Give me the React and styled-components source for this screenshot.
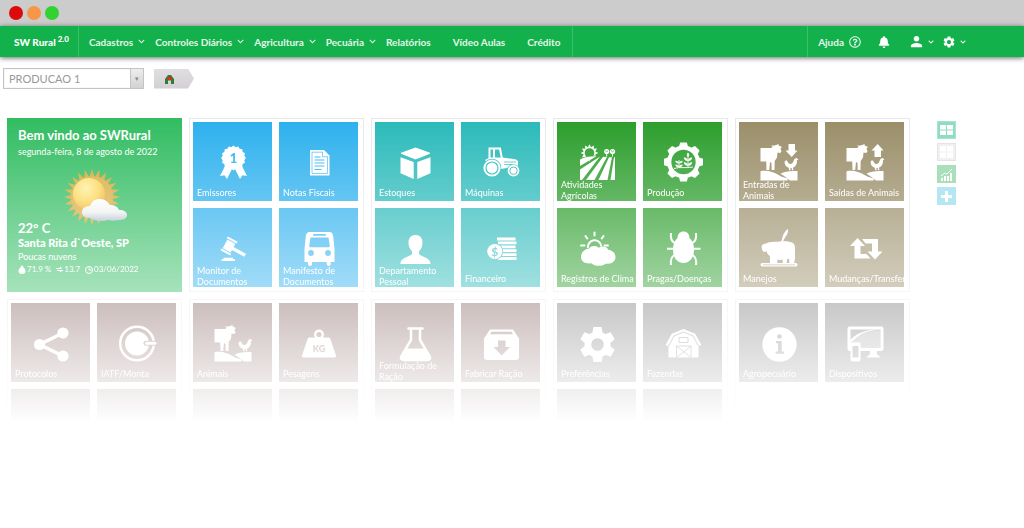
import React from 'react';
import styled, { createGlobalStyle } from 'styled-components';
import { FaBell, FaChevronDown, FaRegQuestionCircle } from 'react-icons/fa';
import { IoMdPerson } from 'react-icons/io';
import { MdSettings } from 'react-icons/md';

const GlobalStyle = createGlobalStyle`
  * {
    box-sizing: border-box;
  }

  body {
    margin: 0;
    background: #fff;
    font-family: Lato, 'Open Sans', sans-serif;
  }

  a {
    color: inherit;
    text-decoration: none;
  }
`;

const WindowBar = styled.div`
  display: flex;
  align-items: center;
  gap: 4px;
  height: 26px;
  padding-left: 9px;
  background: #ccc;
`;

const Dot = styled.span`
  width: 14px;
  height: 14px;
  border-radius: 50%;
  background: ${({ color }) => color};
`;

const Navbar = styled.nav`
  display: flex;
  height: 31px;
  padding-right: 54px;
  background: #12b14b;
  color: #e4f7ea;
  font-size: 10px;
  font-weight: 700;
  box-shadow: 0 1px 5px rgba(0, 0, 0, 0.6);
`;

const Brand = styled.a`
  display: flex;
  align-items: center;
  padding: 0 9px 0 14px;
  border-right: 1px solid #3cbf6b;
  color: #fff;
  font-weight: 900;
  white-space: nowrap;

  sup {
    margin: 0 0 6px 2px;
    font-size: 8px;
    line-height: 10px;
  }
`;

const NavGroup = styled.div`
  display: flex;
  border-right: 1px solid #3cbf6b;
`;

const NavRight = styled.div`
  display: flex;
  margin-left: auto;
  border-left: 1px solid #3cbf6b;
`;

const NavItem = styled.a`
  display: flex;
  align-items: center;
  gap: 5px;
  padding: 0 ${({ $sub }) => ($sub ? '0' : '12px')} 0 10px;
  white-space: nowrap;
`;

const IconItem = styled.button`
  display: flex;
  align-items: center;
  gap: 4px;
  padding: 0 4px;
  border: 0;
  background: none;
  color: #fff;
`;

const BellItem = styled(IconItem)`
  padding: 0 15px 0 5px;
`;

const Toolbar = styled.div`
  display: flex;
  align-items: center;
  gap: 10px;
  padding: 11px 3px 0;
`;

const SelectBox = styled.div`
  display: flex;
  width: 141px;
  height: 21px;
  border: 1px solid #c4c4c4;
  box-shadow: inset 0 0 1px #bbb;
`;

const Select = styled.select`
  flex: 1;
  min-width: 0;
  padding: 0 5px;
  border: 0;
  outline: 0;
  appearance: none;
  background: none;
  color: #999;
  font: 11px/19px Lato, sans-serif;
`;

const SelectArrow = styled.span`
  display: grid;
  place-items: center;
  width: 13px;
  border-left: 1px solid #c4c4c4;
  background: linear-gradient(#eee, #d2d2d2);
  color: #888;
  font-size: 7px;
  pointer-events: none;
`;

const Crumb = styled.a`
  display: flex;
  align-items: center;
  width: 40px;
  height: 20px;
  padding-left: 10px;
  background: linear-gradient(#e0dee0, #d2d0d2);
  clip-path: polygon(0 0, 34px 0, 100% 50%, 34px 100%, 0 100%);
`;

const Main = styled.main`
  display: flex;
  gap: 26px;
  align-items: flex-start;
  padding: 29px 68px 0 7px;
`;

const Board = styled.div`
  display: grid;
  flex: 1;
  grid-template-columns: repeat(auto-fill, 175px);
  gap: 7px;
  mask-image: linear-gradient(#000 4px, transparent 304px);
`;

const Welcome = styled.section`
  display: flex;
  flex-direction: column;
  height: 174px;
  padding: 9px 11px 0;
  background: #33bd63;
  color: #fff;
  font-size: 9px;
  line-height: 13px;
  white-space: nowrap;

  h1,
  h2,
  p {
    margin: 0;
  }

  h1 {
    font-size: 13px;
    line-height: 16px;
  }

  h2 {
    font-size: 11px;
    font-weight: 900;
    line-height: 14px;
  }
`;

const Today = styled.p`
  padding-top: 2px;
`;

const SunPicture = styled.svg`
  width: 70px;
  height: 60px;
  margin: 10px 0 -8px 44px;
`;

const Temperature = styled.strong`
  font-size: 13px;
  line-height: 16px;
`;

const Measures = styled.p`
  display: flex;
  gap: 5px;
  font-size: 8px;

  span {
    display: flex;
    align-items: center;
    gap: 1px;
  }
`;

const Group = styled.section`
  display: grid;
  grid-template-columns: 79px 79px;
  grid-auto-rows: 79px;
  align-content: start;
  gap: 7px;
  height: 174px;
  padding: 3px;
  border: 1px solid #e8e8e8;
`;

const Tile = styled.a`
  display: grid;
  grid-template-columns: 100%;
  grid-template-rows: 100%;
  overflow: hidden;
  background: ${({ $color }) => $color};
  color: ${({ $color }) => $color};

  > * {
    grid-area: 1 / 1;
  }
`;

const TileIcon = styled.svg`
  place-self: center;
  width: 40px;
  height: 40px;
  fill: #fff;
`;

const TileLabel = styled.span`
  align-self: end;
  min-height: 14px;
  padding-left: 4px;
  color: #fff;
  font-size: 9px;
  line-height: 11px;
  white-space: ${({ $oneLine }) => ($oneLine ? 'nowrap' : 'normal')};
`;

const Shortcuts = styled.aside`
  display: flex;
  flex-direction: column;
  gap: 4px;
  padding-top: 3px;
`;

const Shortcut = styled.button`
  display: grid;
  place-items: center;
  width: 19px;
  height: 18px;
  padding: 0;
  border: 1px solid ${({ $border }) => $border};
  background: ${({ $color }) => $color};
`;

// closed polygon that alternates between two radii
const burst = (cx, cy, points, outer, inner) =>
  Array.from({ length: points * 2 }, (_, i) => {
    const r = i % 2 ? inner : outer;
    const a = (i * Math.PI) / points - Math.PI / 2;
    return `${(cx + r * Math.cos(a)).toFixed(2)},${(cy + r * Math.sin(a)).toFixed(2)}`;
  }).join(' ');

const Teeth = ({ cx, cy, count, r, width, height }) =>
  Array.from({ length: count }, (_, i) => (
    <path
      key={i}
      d={`M${cx - width / 2} ${cy - r + height}L${cx - width / 2 + 1.2} ${cy - r}h${width - 2.4}L${cx + width / 2} ${cy - r + height}z`}
      transform={`rotate(${(i * 360) / count} ${cx} ${cy})`}
    />
  ));

const Cow = () => (
  <>
    <path d="M1.5 6h10.7l1.3-1.2L12.3 3l2 .8 3-.8 2.2-1 .2 1.4L23 5l-1.5 1.6 1 3.2-1.5 1.2-2.5-.4-.5 4.9-2.3 3.500-.2 9H12.700l-.2-7-1.500-1-.8 8H7.500l-.3-8.500H1.500z" />
    <path d="M1.5 29.300c7-1.300 12 .4 18.500 4 4 2.200 7.500 3 9 3.200l-.6 2H1.500z" />
    <path d="M21.500 31.700c4-2.200 9-3 17-2.600v9.400H31c-2.500-2-5.500-4.600-9.500-6.800z" />
  </>
);

const Hen = () => (
  <path d="M25.500 20l1.500-2 1.600 1.500c1 3 3.400 3 5 1.400l2-4.200 2-.7 1.800 1.500-1.500.8c.5 4-1.500 6.400-4 7.500l.6 2.500h-1.400l-.5-2.200h-1.200l.3 2.200h-1.500l-.5-2.600c-3-.9-4-3.200-4.200-5.700z" />
);

const icons = {
  award: (
    <>
      <path d="M12 24L7 34l4.500-.8L14 37l5-10zM29 24l5 10-4.500-.8L27 37l-5-10z" />
      <polygon points={burst(20.5, 16, 16, 12.4, 11)} />
      <text x="20.5" y="21" textAnchor="middle" fontSize="13" fontWeight="900" fill="currentColor">
        1
      </text>
    </>
  ),
  document: (
    <>
      <path d="M11 8h14l5.500 5.500v20H11z" />
      <path
        d="M13 10.200h10.500v4.500h5v16.800H13z"
        fill="none"
        stroke="currentColor"
        strokeWidth=".7"
      />
      <path d="M15.500 15h6M15.500 18h10M15.500 21h10M15.500 24h10M15.500 27.500h7" stroke="currentColor" strokeWidth="1.2" />
    </>
  ),
  gavel: (
    <>
      <g transform="rotate(28 16 18)">
        <path d="M11.500 13h9v10h-9zM10.500 10.200h11v2h-11zM10.500 23.800h11v2h-11zM20 16.800h14.500v3.400H20z" />
      </g>
      <path d="M10.500 29.800h9.500v1.500h2v1.700H8.500v-1.700h2z" />
    </>
  ),
  bus: (
    <>
      <path d="M11 4h19c3 0 4 2 4.300 5l1.200 12v13h-3.800v2a2 2 0 0 1-4 0v-2H13v2a2 2 0 0 1-4 0v-2H5.500V21L6.700 9c.3-3 1.300-5 4.300-5z" />
      <g fill="currentColor">
        <rect x="14" y="6" width="13" height="1.8" rx=".9" />
        <path d="M11.500 9.500h18l1.300 8.500c.1.700-.3 1.200-1 1.200H11.200c-.7 0-1.100-.5-1-1.200z" />
        <circle cx="12" cy="25" r="2.9" />
        <circle cx="29" cy="25" r="2.9" />
      </g>
    </>
  ),
  cube: <path d="M20.500 5.500l14.500 5.300v1l-14.500 5.700L6 11.800v-1zM5.500 15.200L18.700 20v17L5.500 31.200zM35.500 15.200L22.300 20v17l13.200-5.800z" />,
  tractor: (
    <>
      <path
        d="M8.500 17V6.500h10.500L21 17M13 7v10"
        fill="none"
        stroke="#fff"
        strokeWidth="2"
      />
      <path d="M4 18l5-2.500h12l13.500 1.800 2.500 1.700V24l-17 3-2 2H15z" />
      <path d="M23 20h12M23 22.500h8" stroke="currentColor" strokeWidth=".8" />
      <circle cx="11" cy="26" r="9.3" fill="currentColor" />
      <circle cx="11" cy="26" r="8.6" />
      <circle cx="11" cy="26" r="6" fill="none" stroke="currentColor" strokeWidth="1.2" />
      <circle cx="32.5" cy="28.7" r="6.5" fill="currentColor" />
      <circle cx="32.5" cy="28.7" r="5.9" />
      <circle cx="32.5" cy="28.7" r="3.7" fill="none" stroke="currentColor" />
    </>
  ),
  person: (
    <path d="M20.500 7c4.500 0 7 3 7 7.500 0 3.800-1.500 7-3.500 8.700v2.300c0 3 11.500 3.300 11.500 10.500h-30c0-7.200 11.500-7.500 11.500-10.500v-2.300c-2-1.700-3.500-4.900-3.500-8.700 0-4.500 2.500-7.500 7-7.500z" />
  ),
  coins: (
    <>
      <path
        d="M16 11h18.500M17 14.900h18.500M16 18.800h18.500M17 22.700h18.500M17 26.600h18.500M17 30.500h18.500"
        stroke="#fff"
        strokeWidth="2.8"
      />
      <circle cx="13.8" cy="23.5" r="8.4" fill="currentColor" />
      <circle cx="13.8" cy="23.5" r="7.6" />
      <text x="13.8" y="28" textAnchor="middle" fontSize="12" fontWeight="700" fill="currentColor">
        $
      </text>
    </>
  ),
  field: (
    <>
      <polygon points={burst(12.5, 11, 12, 8.8, 6)} />
      <circle cx="12.5" cy="11" r="4.8" fill="currentColor" />
      <path d="M3 16.500c8-4 20-3.500 35-2v4H3z" fill="currentColor" />
      <path d="M3 17.500c4-2.500 10-3.500 16.500-3.300L3 24zM23 14.500L3 27.500V38h2zM26 14.700L9 38h8.500L30 15zM32 15.200L21.500 38h9L35 15.200zM37 15.200h1V38h-4.500z" />
      <circle cx="29.7" cy="9.5" r="2.6" />
      <circle cx="35.5" cy="9.5" r="2.6" />
      <path d="M29.700 9v5.500M35.500 9v5.500" stroke="#fff" />
      <path d="M28.300 8.600l1.400 1.200 1.400-1.200M34.100 8.600l1.400 1.200 1.400-1.200" fill="none" stroke="currentColor" strokeWidth=".8" />
    </>
  ),
  gearPlant: (
    <>
      <Teeth cx={20.5} cy={20} count={8} r={19.5} width={9} height={4} />
      <circle cx="20.5" cy="20" r="16.4" />
      <circle cx="20.5" cy="20" r="12.2" fill="currentColor" />
      <path d="M16 26v-8M25 25V12M11 26.500c6-2 12 0 19-1.500" fill="none" stroke="#fff" strokeWidth=".9" />
      <path d="M16 21.500c-2.500 0-3.500-1-3.700-2.800 2.400 0 3.500 1 3.700 2.800zM16 21.500c2.500 0 3.500-1 3.700-2.800-2.400 0-3.500 1-3.700 2.800zM16 25.300c-2.500 0-3.500-1-3.700-2.800 2.400 0 3.500 1 3.700 2.800zM16 25.300c2.500 0 3.500-1 3.700-2.800-2.400 0-3.500 1-3.700 2.800zM25 19c-3 0-4-1.500-4.200-3.800 2.800.3 4 1.500 4.200 3.800zM25 19c3 0 4-1.500 4.200-3.800-2.800.3-4 1.500-4.200 3.800zM25 23.800c-3 0-4-1.500-4.200-3.800 2.800.3 4 1.500 4.200 3.800zM25 23.800c3 0 4-1.500 4.200-3.800-2.800.3-4 1.500-4.200 3.800zM25 15c-1.700-1.500-1.700-3 0-4.500 1.700 1.500 1.700 3 0 4.500z" />
    </>
  ),
  cloudSun: (
    <>
      <path d="M17.500 4.500v3M8.500 8l1.700 2.500M26.500 8l-1.700 2.500M4 17.500h3.500M27.500 17.500h3.500" stroke="#fff" strokeWidth="2" strokeLinecap="round" />
      <path d="M11 20a6.700 6.700 0 1 1 13.300-1.500" fill="none" stroke="#fff" strokeWidth="2" />
      <path d="M12 20.500c2-3.200 8-3.200 9.500-.7 4-3 9.500-.7 9.500 2 5 .7 7.500 3.700 7.500 7.200 0 4.500-4 7.500-9.500 6.500-3.500 3.200-11 3.200-14.500-.3-6 1-10.500-1.700-10.500-6.200 0-4.500 3-7.500 8-8.500z" />
    </>
  ),
  bug: (
    <>
      <path d="M20.500 3.500c3.500 0 6 2.700 6 6.500 3 2.500 4.500 6.500 4.500 11.500 0 8-4 13.500-10.500 13.500S10 29.500 10 21.500C10 16.500 11.500 12.500 14.500 10c0-3.800 2.500-6.500 6-6.500z" />
      <path d="M11.500 15C8 13 7.500 9 8 5M29.500 15c3.500-2 4-6 3.500-10M10.500 20.700H4M30.500 20.700H37.500M11.500 27C8 29 7.500 33 8 37M29.500 27c3.500 2 4 6 3.500 10" fill="none" stroke="#fff" strokeWidth="2" />
    </>
  ),
  cowIn: (
    <>
      <Cow />
      <Hen />
      <path d="M29.500 2h6.500v6.500h2.500L32.700 15l-6.200-6.500h3z" />
    </>
  ),
  cowOut: (
    <>
      <Cow />
      <Hen />
      <path d="M29.500 15H36V8.500h2.500L32.700 2l-6.200 6.500h3z" />
    </>
  ),
  cowHen: (
    <>
      <Cow />
      <Hen />
    </>
  ),
  handling: (
    <>
      <path d="M7 15.500c4-2 8-1.500 12-1.700 5-.8 10-.6 14 .7 2 .8 3 2.500 3 6V30c0 2-.7 3-1 6h-4.500L30 30.500l-2 1-.5 4.500H24l-.5-4.500c-2 .5-3 .5-5 0l-.5 4.500h-7v-8c-2-1-3-3-3.500-5-1.500 1.200-3 1.200-4-.2l-1-4.300 1.500-2.300z" />
      <path d="M22 14.500l2-7C25 5 26.500 2.500 29 1c.5 3-.8 6-3 8.500l-2.500 5z" />
      <rect x="1.5" y="35" width="37" height="3.5" rx="1.7" />
      <path d="M4 36.800h32" stroke="currentColor" strokeWidth=".7" />
    </>
  ),
  transfer: (
    <path d="M12.500 10L20 18h-4.500v8h6l4 4.500H9.500V18H5zM30 31.500L22.500 23.500H27v-8h-6.500l-3.500-4.500h16v12.500h4.500z" />
  ),
  share: (
    <>
      <path d="M32 10L8.500 21.500 32 33" fill="none" stroke="#fff" strokeWidth="3.5" />
      <circle cx="8.5" cy="21.5" r="5.6" />
      <circle cx="32" cy="10" r="5.6" />
      <circle cx="32" cy="33" r="5.6" />
    </>
  ),
  dial: (
    <>
      <circle cx="20" cy="20.5" r="16.8" fill="none" stroke="#fff" strokeWidth="2.5" />
      <circle cx="20" cy="20.5" r="12" />
      <rect x="26.5" y="17.7" width="13" height="5" rx="2.5" fill="currentColor" />
      <rect x="28" y="18.7" width="11.5" height="3" rx="1.5" />
    </>
  ),
  weight: (
    <>
      <circle cx="20" cy="11.5" r="3.8" fill="none" stroke="#fff" strokeWidth="2.4" />
      <path d="M10.500 14.500h19c1 0 1.600.5 1.900 1.500L37 32.500c.3 1.200-.2 2-1.500 2h-31c-1.300 0-1.800-.8-1.500-2L8.600 16c.3-1 .9-1.500 1.900-1.500z" />
      <text x="20" y="28.5" textAnchor="middle" fontSize="9" fontWeight="900" fill="currentColor">
        KG
      </text>
    </>
  ),
  flask: (
    <>
      <path
        d="M16 6v11L6.500 33c-1.200 2.200-.3 4 2.500 4h23c2.800 0 3.700-1.800 2.500-4L25 17V6M13.500 5.500h14"
        fill="none"
        stroke="#fff"
        strokeWidth="2.5"
        strokeLinecap="round"
      />
      <path d="M11.500 25.500h18L35 35l-2.500 2.500h-24L6 35z" />
    </>
  ),
  boxDown: (
    <>
      <path d="M9 6.500h23l6 9V34c0 2-1 3-3 3H6c-2 0-3-1-3-3V15.500z" />
      <path d="M10.500 8.800h20l1.500 2.500H9zM17 17.500h7.500V24H29l-8.300 8.500L12.500 24H17z" fill="currentColor" />
    </>
  ),
  gear: (
    <>
      <Teeth cx={20.5} cy={21.5} count={6} r={17.5} width={10.5} height={7} />
      <circle cx="20.5" cy="21.5" r="13" />
      <circle cx="20.5" cy="21.5" r="6.3" fill="currentColor" />
    </>
  ),
  barn: (
    <>
      <path d="M5.500 34.500V21L10 12.500l10.500-5 10.500 5L35.500 21v13.500z" />
      <path d="M3.500 22.500L9.500 11.500l11-4.500 11 4.500 6 11" fill="none" stroke="#fff" strokeWidth="2" />
      <path
        d="M6 22.500l5-9.500 9.500-4 9.500 4 5 9.500M16 14.500h9v5h-9zM13.500 34.500V23h14.500v11.500M13.500 23L28 34.500M28 23L13.500 34.500"
        fill="none"
        stroke="currentColor"
        strokeWidth=".9"
      />
    </>
  ),
  info: (
    <>
      <circle cx="20.5" cy="21.5" r="17.2" />
      <circle cx="20.5" cy="13.5" r="2.3" fill="currentColor" />
      <path d="M17 18h5.700v10.500H25v2.200h-8.500v-2.200H19v-8.200h-2z" fill="currentColor" />
    </>
  ),
  devices: (
    <>
      <path d="M4.500 3.500h32a2 2 0 0 1 2 2V26a2 2 0 0 1-2 2h-32a2 2 0 0 1-2-2V5.500a2 2 0 0 1 2-2z" />
      <path d="M5.500 6.500h30V25h-20v-5.500h-10z" fill="currentColor" />
      <path d="M5.500 20C13 11.500 23 8 35.500 7.500V25h-20v-5z" opacity=".35" />
      <path d="M5.500 20.500C13 11 23 7.500 35.500 6.500H30C18 7.500 9 12 5.500 17z" />
      <path d="M25 28h7v2.500c0 2 3 2 3 4H22c0-2 3-2 3-4z" />
      <rect x="5.5" y="20.5" width="10" height="18" rx="2" />
      <rect x="7.5" y="23" width="6" height="11.5" fill="currentColor" />
    </>
  )
};

const menu = [
  { text: 'Cadastros', sub: true },
  { text: 'Controles Diários', sub: true },
  { text: 'Agricultura', sub: true },
  { text: 'Pecuária', sub: true },
  { text: 'Relatórios' },
  { text: 'Vídeo Aulas' },
  { text: 'Crédito' }
];

const groups = [
  {
    color: '#2eb1ee',
    tiles: [
      ['Emissores', 'award'],
      ['Notas Fiscais', 'document'],
      ['Monitor de Documentos', 'gavel'],
      ['Manifesto de Documentos', 'bus']
    ]
  },
  {
    color: '#2cbaba',
    tiles: [
      ['Estoques', 'cube'],
      ['Máquinas', 'tractor'],
      ['Departamento Pessoal', 'person'],
      ['Financeiro', 'coins']
    ]
  },
  {
    color: '#2d9e2d',
    tiles: [
      ['Atividades Agrícolas', 'field'],
      ['Produção', 'gearPlant'],
      ['Registros de Clima', 'cloudSun', true],
      ['Pragas/Doenças', 'bug']
    ]
  },
  {
    color: '#9b8f6a',
    tiles: [
      ['Entradas de Animais', 'cowIn'],
      ['Saídas de Animais', 'cowOut', true],
      ['Manejos', 'handling'],
      ['Mudanças/Transfer', 'transfer', true]
    ]
  },
  {
    color: '#7f5c5a',
    tiles: [['Protocolos', 'share'], ['IATF/Monta', 'dial'], [], []]
  },
  {
    color: '#7f5c5a',
    tiles: [['Animais', 'cowHen'], ['Pesagens', 'weight'], [], []]
  },
  {
    color: '#7f5c5a',
    tiles: [['Formulação de Ração', 'flask'], ['Fabricar Ração', 'boxDown'], [], []]
  },
  {
    color: '#747474',
    tiles: [['Preferências', 'gear'], ['Fazendas', 'barn'], [], []]
  },
  {
    color: '#747474',
    tiles: [['Agropecuário', 'info'], ['Dispositivos', 'devices']]
  }
];

const SunCloud = () => (
  <SunPicture viewBox="0 0 70 60" aria-hidden="true">
    <defs>
      <radialGradient id="sun" cx="40%" cy="30%" r="70%">
        <stop offset="0" stopColor="#fdf0a0" />
        <stop offset=".6" stopColor="#fbd75a" />
        <stop offset="1" stopColor="#eeb02e" />
      </radialGradient>
      <linearGradient id="cloud" x1="0" y1="0" x2="0" y2="1">
        <stop offset="0" stopColor="#fff" />
        <stop offset=".6" stopColor="#efefef" />
        <stop offset="1" stopColor="#a9bccb" />
      </linearGradient>
    </defs>
    <polygon points={burst(30, 29, 24, 28, 20)} fill="#d9a835" />
    <circle cx="30" cy="29" r="21" fill="#d9ae43" />
    <circle cx="27" cy="26" r="16" fill="url(#sun)" />
    <path
      d="M28 50c-6 0-8-3-8-6 0-4 4-6 8-6 2-6 6-7 10-7 5 0 8 3 10 6 5 0 8 2 9 5 5 0 8 2 8 5 0 4-4 5-8 5-4 1-8 1-11 0-6 2-13 1-18-2z"
      fill="url(#cloud)"
    />
  </SunPicture>
);

const WelcomeCard = () => (
  <Welcome>
    <h1>Bem vindo ao SWRural</h1>
    <Today>segunda-feira, 8 de agosto de 2022</Today>
    <SunCloud />
    <Temperature>22° C</Temperature>
    <h2>Santa Rita d`Oeste, SP</h2>
    <p>Poucas nuvens</p>
    <Measures>
      <span>
        <svg width="8" height="9" viewBox="0 0 7 9" fill="#fff">
          <path d="M3.500 0C5 2.500 7 4 7 6a3.500 3 0 0 1-7 0c0-2 2-3.500 3.500-6z" />
        </svg>
        71.9 %
      </span>
      <span>
        <svg width="7" height="7" viewBox="0 0 7 7" fill="none" stroke="#fff">
          <path d="M0 2.500h5M1 4.500h6M4 1l2 1.500M4 6l2-1.500" />
        </svg>
        13.7
      </span>
      <span>
        <svg width="8" height="8" viewBox="0 0 8 8" fill="none" stroke="#fff">
          <circle cx="4" cy="4" r="3.5" />
          <path d="M4 1.500V4h2.500" />
        </svg>
        03/06/2022
      </span>
    </Measures>
  </Welcome>
);

const TileGroup = ({ color, tiles }) => (
  <Group>
    {tiles.map(([label, icon, oneLine], i) => (
      <Tile key={i} href="#" $color={color}>
        {icon && (
          <TileIcon viewBox="0 0 40 40" aria-hidden="true">
            {icons[icon]}
          </TileIcon>
        )}
        {label && <TileLabel $oneLine={oneLine}>{label}</TileLabel>}
      </Tile>
    ))}
  </Group>
);

const App = () => (
  <>
    <GlobalStyle />
    <WindowBar>
      <Dot color="#dc0a0a" />
      <Dot color="#f79646" />
      <Dot color="#33d233" />
    </WindowBar>
    <Navbar>
      <Brand href="#">
        SW Rural <sup>2.0</sup>
      </Brand>
      <NavGroup>
        {menu.map(({ text, sub }) => (
          <NavItem key={text} href="#" $sub={sub}>
            {text}
            {sub && <FaChevronDown size={7} />}
          </NavItem>
        ))}
      </NavGroup>
      <NavRight>
        <NavItem href="#">
          Ajuda <FaRegQuestionCircle size={12} />
        </NavItem>
        <BellItem aria-label="Notificações">
          <FaBell size={12} />
        </BellItem>
        <IconItem aria-label="Usuário">
          <IoMdPerson size={15} />
          <FaChevronDown size={6} />
        </IconItem>
        <IconItem aria-label="Configurações">
          <MdSettings size={14} />
          <FaChevronDown size={6} />
        </IconItem>
      </NavRight>
    </Navbar>
    <Toolbar>
      <SelectBox>
        <Select aria-label="Propriedade" defaultValue="1">
          <option value="1">PRODUCAO 1</option>
        </Select>
        <SelectArrow>▾</SelectArrow>
      </SelectBox>
      <Crumb href="#" aria-label="Início">
        <svg width="11" height="10" viewBox="0 0 11 10">
          <path d="M1 5l3-4h3l3 4v5H7V6.500H4V10H1z" fill="#2f7d32" />
          <path d="M3 4.500L5.500 2 8 4.500V6H3z" fill="#d0312d" />
        </svg>
      </Crumb>
    </Toolbar>
    <Main>
      <Board>
        <WelcomeCard />
        {groups.map((group, i) => (
          <TileGroup key={i} {...group} />
        ))}
      </Board>
      <Shortcuts>
        <Shortcut $color="#8fdcc4" $border="#a8e4d2" aria-label="Blocos">
          <svg width="13" height="10" viewBox="0 0 13 10" fill="#fff">
            <path d="M0 0h6v4.500H0zM7 0h6v4.500H7zM0 5.500h6V10H0zM7 5.500h6V10H7z" />
          </svg>
        </Shortcut>
        <Shortcut $color="#f1f1f1" $border="#e4e4e4" aria-label="Grade">
          <svg width="13" height="12" viewBox="0 0 13 12" fill="#fff">
            <path d="M0 0h6v5.500H0zM7 0h6v5.500H7zM0 6.500h6V12H0zM7 6.500h6V12H7z" />
          </svg>
        </Shortcut>
        <Shortcut $color="#a9e0b9" $border="#a9e0b9" aria-label="Gráficos">
          <svg width="13" height="13" viewBox="0 0 13 13" fill="#fff">
            <path d="M1 10h2v3H1zM4 8h2v5H4zM7 8h2v5H7zM10 5h2v8h-2z" />
            <path d="M1 8l4-3 2 1 5-5" fill="none" stroke="#fff" />
          </svg>
        </Shortcut>
        <Shortcut $color="#b5e6f3" $border="#b5e6f3" aria-label="Adicionar">
          <svg width="11" height="11" viewBox="0 0 11 11" fill="#fff">
            <path d="M4 0h3v4h4v3H7v4H4V7H0V4h4z" />
          </svg>
        </Shortcut>
      </Shortcuts>
    </Main>
  </>
);

export default App;
